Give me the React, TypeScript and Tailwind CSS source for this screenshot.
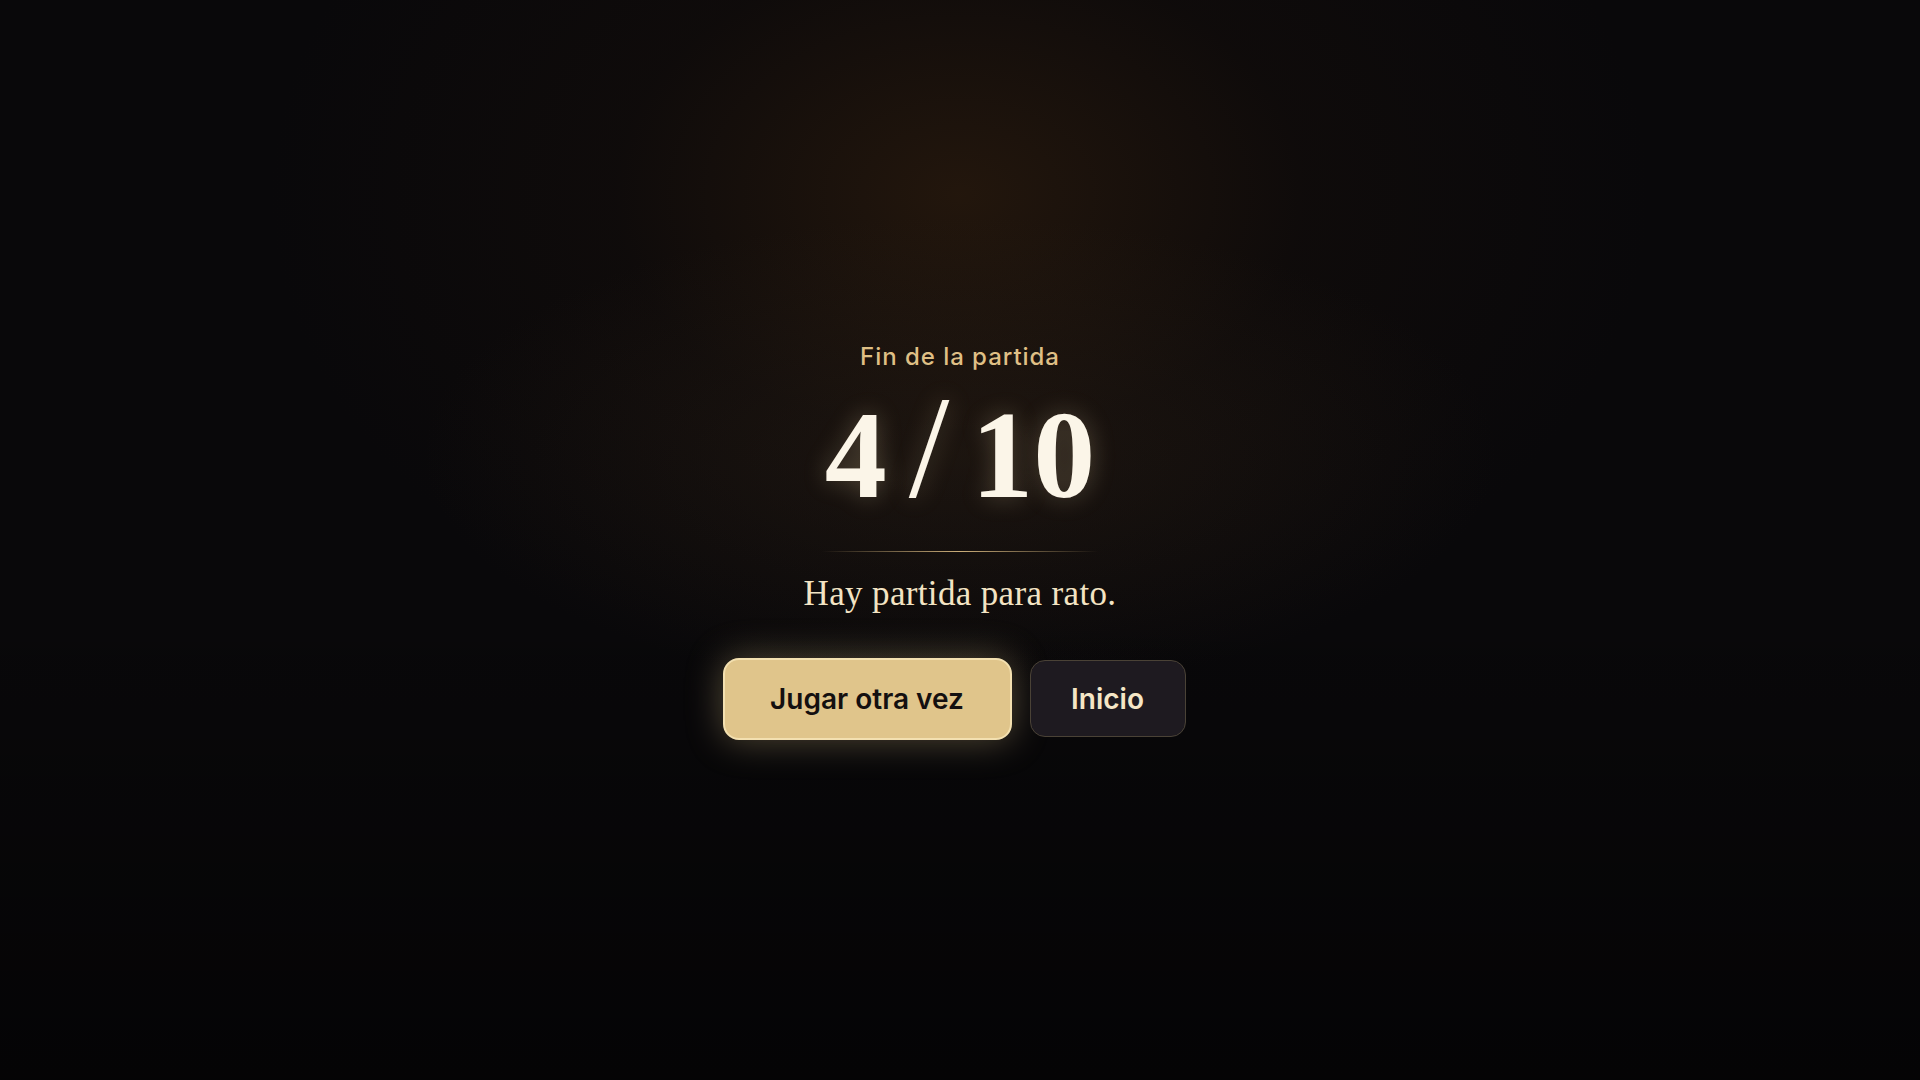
export default function App() {
    return (
        <main className="relative min-h-screen w-full overflow-hidden bg-[#09080a] flex items-center justify-center">
            <div className="pointer-events-none absolute inset-0 bg-[radial-gradient(ellipse_36%_45%_at_50%_18%,rgba(70,42,16,0.42),rgba(40,24,12,0.18)_50%,transparent_100%)]" />
            <div className="pointer-events-none absolute inset-0 bg-[radial-gradient(ellipse_28%_22%_at_50%_42%,rgba(60,44,28,0.3),transparent_100%)]" />
            <div className="pointer-events-none absolute inset-0 bg-[linear-gradient(to_bottom,transparent_55%,rgba(0,0,0,0.5)_100%)]" />

            <section className="relative mt-[4px] flex flex-col items-center">
                <p className="font-['Inter','Liberation_Sans',sans-serif] text-[24px] font-medium leading-none tracking-[0.04em] text-[#dfbf85]">
                    Fin de la partida
                </p>

                <h1 className="mt-[6px] flex items-baseline font-['Liberation_Serif','DejaVu_Serif',serif] text-[#fbf5e8] [text-shadow:0_0_24px_rgba(255,230,180,0.25)]">
                    <span className="text-[124px] font-bold leading-none">4</span>
                    <span className="mx-[22px] text-[146px] font-normal leading-none">/</span>
                    <span className="text-[124px] font-bold leading-none">10</span>
                </h1>

                <div className="mt-[30px] h-px w-[276px] bg-[linear-gradient(to_right,transparent,rgba(223,191,133,0.9)_50%,transparent)]" />

                <p className="mt-[24px] font-['Liberation_Serif','DejaVu_Serif',serif] text-[35px] leading-none tracking-[0.01em] text-[#f3e4c4]">
                    Hay partida para rato.
                </p>

                <div className="mt-[47px] mr-[12px] flex items-center gap-[18px]">
                    <button className="h-[82px] w-[289px] rounded-[16px] border-2 border-[#f3e0b0] bg-[#e0c58b] font-['Inter','Liberation_Sans',sans-serif] text-[28px] font-semibold text-[#141010] shadow-[0_0_36px_rgba(224,197,139,0.35)]">
                        Jugar otra vez
                    </button>
                    <button className="h-[77px] w-[156px] rounded-[15px] border border-[#4a4236] bg-[#1e1a20] font-['Inter','Liberation_Sans',sans-serif] text-[28px] font-semibold text-[#f5e6c6]">
                        Inicio
                    </button>
                </div>
            </section>
        </main>
    );
}
